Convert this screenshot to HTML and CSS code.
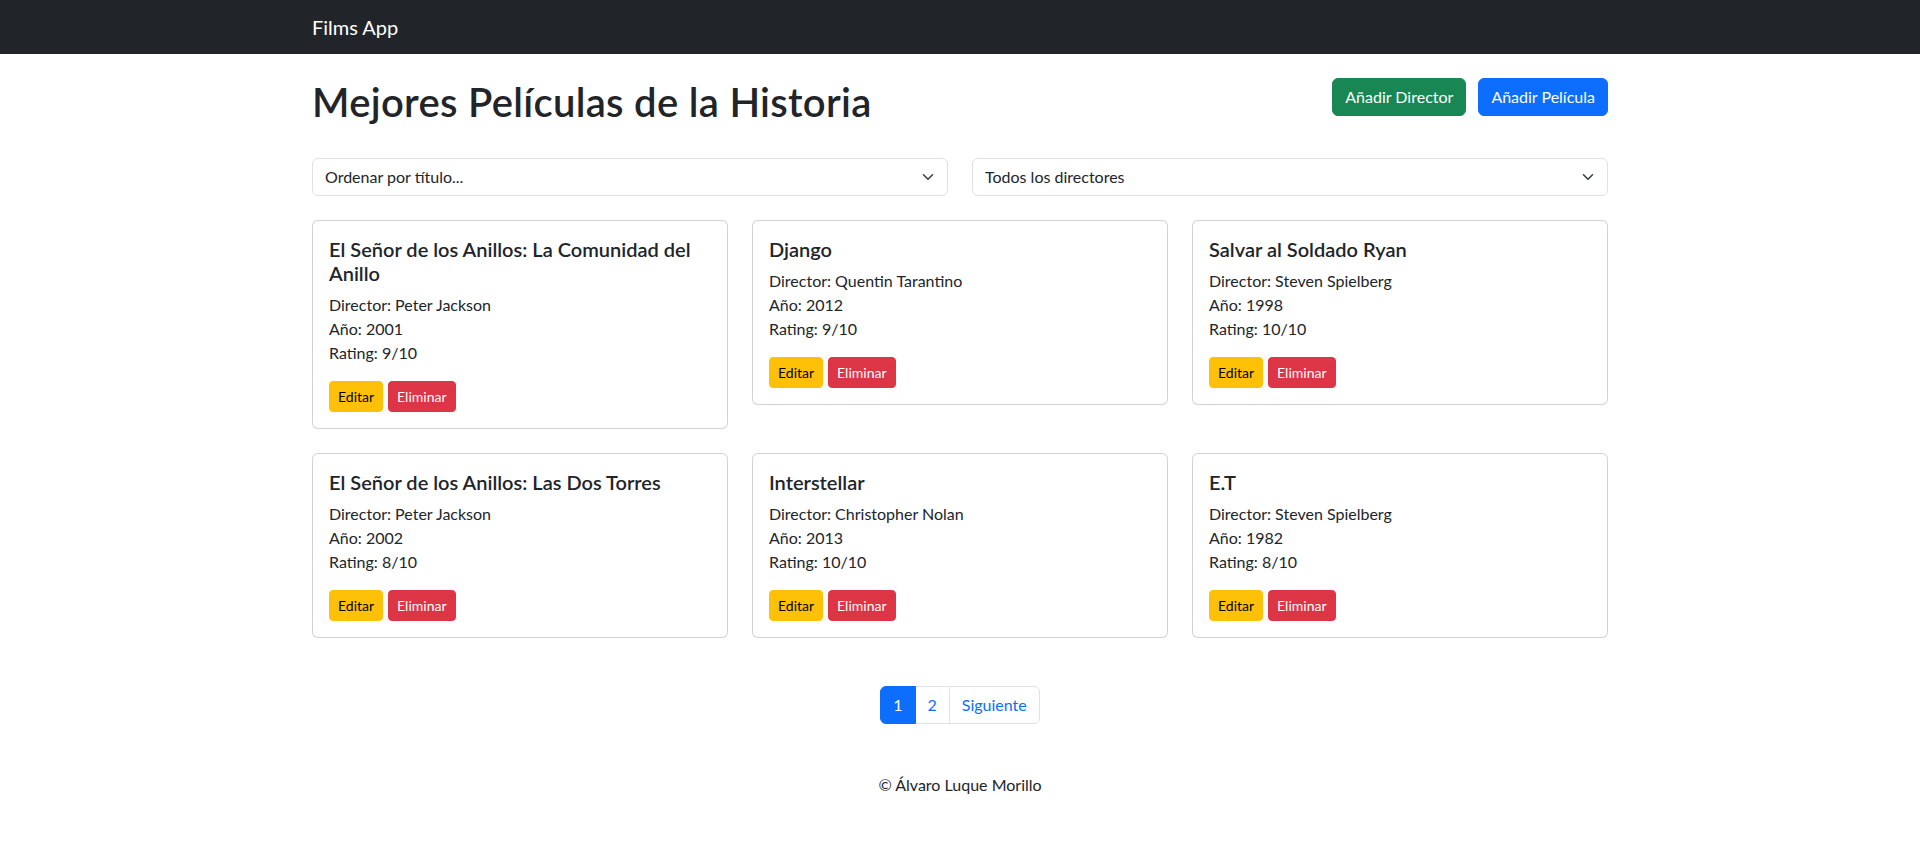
FILE: index.html
```html
<!DOCTYPE html>
<html lang="es">
<head>
<meta charset="utf-8">
<title>Films App</title>
<link rel="stylesheet" href="styles.css">
</head>
<body>
<nav class="navbar">
  <div class="container">
    <a class="brand" href="#">Films App</a>
  </div>
</nav>

<main class="container">
  <div class="header-row">
    <h1 class="page-title">Mejores Películas de la Historia</h1>
    <div class="header-actions">
      <button class="btn btn-success">Añadir Director</button>
      <button class="btn btn-primary">Añadir Película</button>
    </div>
  </div>

  <div class="filters">
    <div class="select-wrap">
      <select class="form-select">
        <option>Ordenar por título...</option>
      </select>
      <svg class="chev" viewBox="0 0 16 16" width="16" height="12"><path fill="none" stroke="#343a40" stroke-linecap="round" stroke-linejoin="round" stroke-width="2" d="m2 5 6 6 6-6"/></svg>
    </div>
    <div class="select-wrap">
      <select class="form-select">
        <option>Todos los directores</option>
      </select>
      <svg class="chev" viewBox="0 0 16 16" width="16" height="12"><path fill="none" stroke="#343a40" stroke-linecap="round" stroke-linejoin="round" stroke-width="2" d="m2 5 6 6 6-6"/></svg>
    </div>
  </div>

  <div class="cards">
    <div class="card">
      <h5 class="card-title">El Señor de los Anillos: La Comunidad del Anillo</h5>
      <p class="card-text">Director: Peter Jackson<br>Año: 2001<br>Rating: 9/10</p>
      <div class="card-actions"><button class="btn btn-sm btn-warning">Editar</button><button class="btn btn-sm btn-danger">Eliminar</button></div>
    </div>
    <div class="card">
      <h5 class="card-title">Django</h5>
      <p class="card-text">Director: Quentin Tarantino<br>Año: 2012<br>Rating: 9/10</p>
      <div class="card-actions"><button class="btn btn-sm btn-warning">Editar</button><button class="btn btn-sm btn-danger">Eliminar</button></div>
    </div>
    <div class="card">
      <h5 class="card-title">Salvar al Soldado Ryan</h5>
      <p class="card-text">Director: Steven Spielberg<br>Año: 1998<br>Rating: 10/10</p>
      <div class="card-actions"><button class="btn btn-sm btn-warning">Editar</button><button class="btn btn-sm btn-danger">Eliminar</button></div>
    </div>
    <div class="card">
      <h5 class="card-title">El Señor de los Anillos: Las Dos Torres</h5>
      <p class="card-text">Director: Peter Jackson<br>Año: 2002<br>Rating: 8/10</p>
      <div class="card-actions"><button class="btn btn-sm btn-warning">Editar</button><button class="btn btn-sm btn-danger">Eliminar</button></div>
    </div>
    <div class="card">
      <h5 class="card-title">Interstellar</h5>
      <p class="card-text">Director: Christopher Nolan<br>Año: 2013<br>Rating: 10/10</p>
      <div class="card-actions"><button class="btn btn-sm btn-warning">Editar</button><button class="btn btn-sm btn-danger">Eliminar</button></div>
    </div>
    <div class="card">
      <h5 class="card-title">E.T</h5>
      <p class="card-text">Director: Steven Spielberg<br>Año: 1982<br>Rating: 8/10</p>
      <div class="card-actions"><button class="btn btn-sm btn-warning">Editar</button><button class="btn btn-sm btn-danger">Eliminar</button></div>
    </div>
  </div>

  <nav class="pager">
    <ul class="pagination">
      <li class="page-item active"><a class="page-link" href="#">1</a></li>
      <li class="page-item"><a class="page-link" href="#">2</a></li>
      <li class="page-item"><a class="page-link" href="#">Siguiente</a></li>
    </ul>
  </nav>
</main>

<footer class="footer">
  <p>© Álvaro Luque Morillo</p>
</footer>
</body>
</html>
```

FILE: styles.css
```css
* { box-sizing: border-box; }

body {
  margin: 0;
  font-family: Lato, "Noto Sans", "Liberation Sans", sans-serif;
  font-size: 16px;
  line-height: 1.5;
  color: #212529;
  background: #fff;
}

.container {
  max-width: 1320px;
  margin: 0 auto;
  padding: 0 12px;
}

.navbar {
  background: #212529;
  height: 54px;
  display: flex;
  align-items: center;
}
.navbar .container { width: 100%; }
.brand {
  color: #fff;
  text-decoration: none;
  font-size: 20px;
  line-height: 30px;
}

.header-row {
  display: flex;
  justify-content: space-between;
  align-items: flex-start;
  margin-top: 24px;
  margin-bottom: 24px;
}
.page-title {
  margin: 0 0 8px 0;
  font-size: 40px;
  font-weight: 600;
  letter-spacing: 0.3px;
  line-height: 48px;
}
.header-actions {
  display: flex;
  gap: 12px;
}

.btn {
  display: inline-block;
  font-family: inherit;
  font-size: 16px;
  line-height: 24px;
  padding: 6px 12px;
  border: 1px solid transparent;
  border-radius: 6px;
  cursor: pointer;
}
.btn-success { background: #198754; border-color: #198754; color: #fff; }
.btn-primary { background: #0d6efd; border-color: #0d6efd; color: #fff; }
.btn-sm {
  font-size: 14px;
  line-height: 21px;
  padding: 4px 8px;
  border-radius: 4px;
}
.btn-warning { background: #ffc107; border-color: #ffc107; color: #000; }
.btn-danger { background: #dc3545; border-color: #dc3545; color: #fff; }

.filters {
  display: grid;
  grid-template-columns: 1fr 1fr;
  gap: 24px;
  margin-bottom: 24px;
}
.select-wrap { position: relative; }
.form-select {
  display: block;
  width: 100%;
  height: 38px;
  appearance: none;
  -webkit-appearance: none;
  font-family: inherit;
  font-size: 16px;
  line-height: 24px;
  color: #212529;
  background: #fff;
  border: 1px solid #dee2e6;
  border-radius: 6px;
  padding: 6px 36px 6px 12px;
}
.chev {
  position: absolute;
  right: 12px;
  top: 13px;
  pointer-events: none;
}

.cards {
  display: grid;
  grid-template-columns: repeat(3, 1fr);
  gap: 24px;
  align-items: start;
}
.card {
  border: 1px solid rgba(0, 0, 0, 0.175);
  border-radius: 6px;
  padding: 16px;
  background: #fff;
}
.card-title {
  margin: 0 0 8px 0;
  font-size: 20px;
  font-weight: 600;
  line-height: 24px;
}
.card-text {
  margin: 0 0 16px 0;
}
.card-actions {
  display: flex;
  gap: 5px;
}

.pager {
  display: flex;
  justify-content: center;
  margin-top: 48px;
}
.pagination {
  display: flex;
  list-style: none;
  margin: 0;
  padding: 0;
}
.page-link {
  display: block;
  padding: 6px 12px;
  line-height: 24px;
  font-size: 16px;
  color: #0d6efd;
  text-decoration: none;
  background: #fff;
  border: 1px solid #dee2e6;
  margin-left: -1px;
}
.page-item:first-child .page-link {
  margin-left: 0;
  border-radius: 6px 0 0 6px;
}
.page-item:last-child .page-link {
  border-radius: 0 6px 6px 0;
}
.page-item.active .page-link {
  background: #0d6efd;
  border-color: #0d6efd;
  color: #fff;
  position: relative;
}

.footer {
  text-align: center;
  margin-top: 49px;
}
.footer p { margin: 0; }
```
